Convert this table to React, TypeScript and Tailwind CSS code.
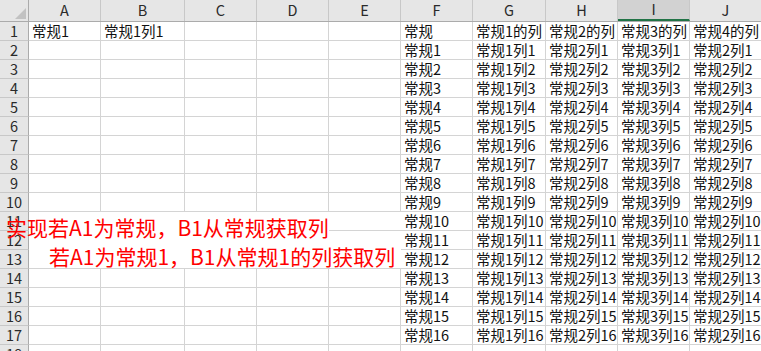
import React from 'react'

const COLS = ['A', 'B', 'C', 'D', 'E', 'F', 'G', 'H', 'I', 'J']
const WIDTHS = [
  'w-[72px]',
  'w-[84px]',
  'w-[72px]',
  'w-[72px]',
  'w-[72px]',
  'w-[72px]',
  'w-[73px]',
  'w-[72px]',
  'w-[72px]',
  'w-[72px]',
]

// cell contents
const cellText = (row: number, col: number): string => {
  if (row === 1) {
    return ['常规1', '常规1列1', '', '', '', '常规', '常规1的列', '常规2的列', '常规3的列', '常规4的列'][col]
  }
  if (row > 17) return ''
  const n = row - 1
  switch (col) {
    case 5:
      return `常规${n}`
    case 6:
      return `常规1列${n}`
    case 7:
      return `常规2列${n}`
    case 8:
      return `常规3列${n}`
    case 9:
      return `常规2列${n}`
    default:
      return ''
  }
}

// rows 11-13, A-E are white-filled (no gridlines)
const cellBorder = (row: number, col: number): string => {
  const filled = row >= 11 && row <= 13 && col <= 4
  if (!filled) return 'border-r border-b border-[#d4d4d4]'
  if (row === 13) return 'border-b border-[#d4d4d4]'
  if (row === 11 && col === 4) return 'border-b border-[#d4d4d4]'
  return ''
}

const HeaderRow = () => (
  <div className="flex h-[22px] shrink-0 border-b border-[#ababab] bg-[#e6e6e6]">
    <div className="relative w-[29px] shrink-0 border-r border-[#ababab]">
      <svg className="absolute left-[15px] top-[8px]" width="11" height="11" viewBox="0 0 11 11">
        <path d="M11 0 L11 11 L0 11 Z" fill="#c2c2c2" />
      </svg>
    </div>
    {COLS.map((c, i) => (
      <div
        key={c}
        className={`${WIDTHS[i]} shrink-0 flex items-center justify-center border-r border-[#c8c8c8] ${
          c === 'I' ? 'bg-[#d2d2d2] border-b-2 border-b-[#217346]' : ''
        }`}
      >
        <span className="text-[14.5px] leading-none text-[#2a2a2a]">{c}</span>
      </div>
    ))}
  </div>
)

const Row = ({ row }: { row: number }) => (
  <div className="flex h-[19px] shrink-0">
    <div className="w-[29px] shrink-0 flex items-center justify-center border-r border-b border-r-[#ababab] border-b-[#c8c8c8] bg-[#e6e6e6]">
      <span className="text-[14.5px] leading-none text-[#2a2a2a]">{row}</span>
    </div>
    {COLS.map((c, i) => (
      <div key={c} className={`${WIDTHS[i]} shrink-0 ${cellBorder(row, i)}`}>
        <div className="pl-[3px] whitespace-nowrap text-[14.5px] leading-[18px] text-[#111]">
          {cellText(row, i)}
        </div>
      </div>
    ))}
  </div>
)

export default function App() {
  const rows = Array.from({ length: 18 }, (_, i) => i + 1)
  return (
    <div className="relative w-[761px] h-[351px] overflow-hidden bg-white font-['Noto_Sans_CJK_SC','Noto_Sans',sans-serif]">
      <div className="flex flex-col w-[800px]">
        <HeaderRow />
        {rows.map((r) => (
          <Row key={r} row={r} />
        ))}
      </div>
      {/* text box */}
      <div className="absolute left-[6px] top-[213px] text-[21px] leading-[29px] text-[#ff0000] whitespace-nowrap">
        <div>实现若A1为常规，B1从常规获取列</div>
        <div className="pl-[43px]">若A1为常规1，B1从常规1的列获取列</div>
      </div>
    </div>
  )
}
